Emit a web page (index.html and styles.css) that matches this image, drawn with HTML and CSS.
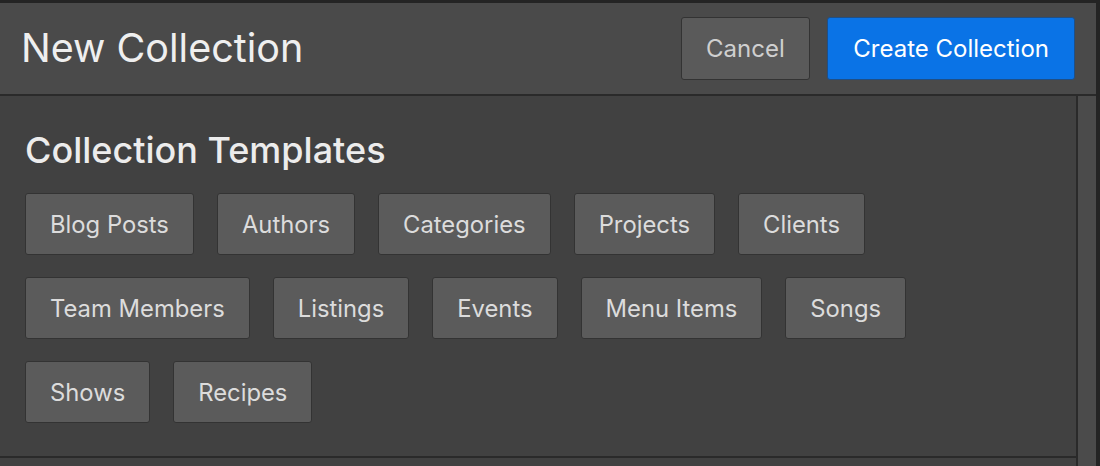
FILE: index.html
```html
<!DOCTYPE html>
<html>
<head>
<meta charset="utf-8">
<link rel="stylesheet" href="styles.css">
</head>
<body>
<div class="app">
  <header class="header">
    <h1 class="title">New Collection</h1>
    <div class="actions">
      <button class="btn btn-cancel">Cancel</button>
      <button class="btn btn-primary">Create Collection</button>
    </div>
  </header>
  <div class="main">
    <div class="content">
      <section class="templates">
        <h2 class="section-title">Collection Templates</h2>
        <div class="tags">
          <button class="tag">Blog Posts</button>
          <button class="tag">Authors</button>
          <button class="tag">Categories</button>
          <button class="tag">Projects</button>
          <button class="tag">Clients</button>
          <button class="tag">Team Members</button>
          <button class="tag">Listings</button>
          <button class="tag">Events</button>
          <button class="tag">Menu Items</button>
          <button class="tag">Songs</button>
          <button class="tag">Shows</button>
          <button class="tag">Recipes</button>
        </div>
      </section>
      <div class="next-section"></div>
    </div>
    <div class="scrollbar"></div>
  </div>
</div>
</body>
</html>
```
FILE: styles.css
```css
html, body {
  margin: 0;
  padding: 0;
  background: #242424;
  height: 466px;
  overflow: hidden;
}
.app {
  margin-top: 3px;
  width: 1096px;
  height: 463px;
  display: flex;
  flex-direction: column;
  font-family: Inter, "Noto Sans", sans-serif;
}
.header {
  height: 93px;
  box-sizing: border-box;
  background: #4a4a4a;
  border-bottom: 2px solid #2a2a2a;
  display: flex;
  align-items: center;
  justify-content: space-between;
  padding: 0 21px 1px 21px;
  flex-shrink: 0;
}
.title {
  margin: 0;
  font-weight: 400;
  font-size: 39.5px;
  color: #efefef;
}
.actions {
  display: flex;
  gap: 17px;
}
.btn {
  font-family: inherit;
  font-size: 24px;
  height: 63px;
  border-radius: 3px;
  padding: 0 25px;
  cursor: pointer;
}
.btn-cancel {
  background: #5a5a5a;
  border: 1px solid #333;
  color: #cfcfcf;
  padding: 0 24.5px;
}
.btn-primary {
  background: #0a73e6;
  border: 1px solid #1f4f86;
  color: #ffffff;
}
.main {
  flex: 1;
  display: flex;
  background: #414141;
}
.content {
  flex: 1;
  border-right: 2px solid #2a2a2a;
  display: flex;
  flex-direction: column;
}
.templates {
  padding: 32px 0 0 25px;
  height: 362px;
  box-sizing: border-box;
  border-bottom: 2px solid #2a2a2a;
}
.section-title {
  margin: 0 0 21px 0;
  font-weight: 500;
  font-size: 36px;
  line-height: 44px;
  color: #ececec;
}
.tags {
  display: flex;
  flex-wrap: wrap;
  gap: 22px 23px;
  width: 900px;
}
.tag {
  font-family: inherit;
  font-size: 23.8px;
  height: 62px;
  padding: 0 24px;
  background: #5b5b5b;
  border: 1px solid #333;
  border-radius: 3px;
  color: #dcdcdc;
}
.scrollbar {
  width: 18px;
  background: #4b4b4b;
}
```
